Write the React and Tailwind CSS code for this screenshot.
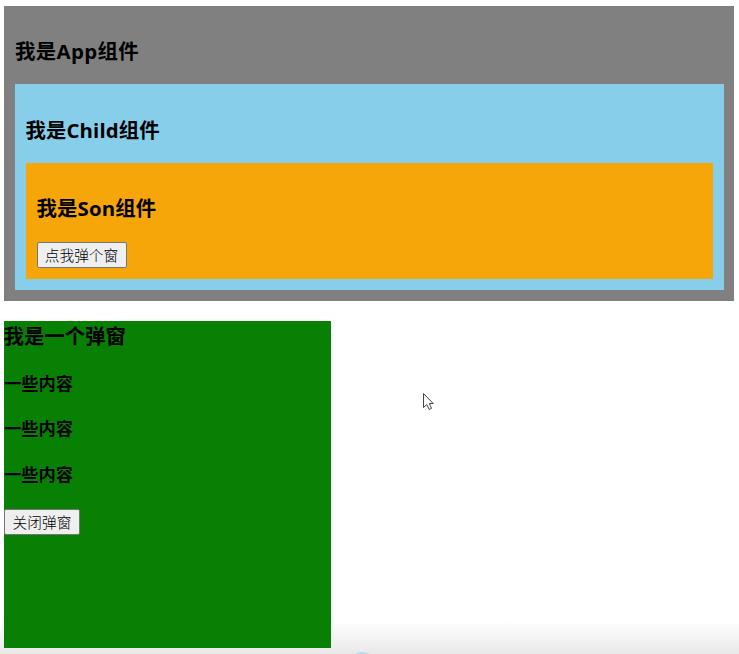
import React, { useState } from 'react';

const Son = ({ onOpen }) => (
  <div className="h-[116px] bg-[#f7a609] px-[11px] pt-[30px]">
    <h3 className="h-[30px] text-[20.4px] leading-[30px] font-bold tracking-[0.15px]">我是Son组件</h3>
    <button
      onClick={onOpen}
      className="mt-[19px] block h-[26px] w-[90px] rounded-[2px] border border-[#767676] bg-[#efefef] text-[14.7px] leading-[24px] font-light whitespace-nowrap"
    >
      点我弹个窗
    </button>
  </div>
);

const Child = ({ onOpen }) => (
  <div className="h-[206px] bg-[#87ceeb] pt-[31px] pr-[11px] pl-[10.5px]">
    <h3 className="mb-[18px] h-[30px] text-[20.4px] leading-[30px] font-bold tracking-[0.1px]">我是Child组件</h3>
    <Son onOpen={onOpen} />
  </div>
);

const Dialog = ({ onClose }) => (
  <div className="mt-5 h-[327px] w-[327px] bg-[#088004]">
    <h3 className="-ml-[0.5px] h-[30px] text-[20.4px] leading-[30px] font-bold">我是一个弹窗</h3>
    <div className="mt-[20px] flex flex-col gap-[19.4px] text-[17.3px] leading-[26px] font-bold">
      <h4>一些内容</h4>
      <h4>一些内容</h4>
      <h4>一些内容</h4>
    </div>
    <button
      onClick={onClose}
      className="mt-[21.2px] block h-[26px] w-[76px] rounded-[2px] border border-[#767676] bg-[#efefef] text-[14.7px] leading-[24px] font-light whitespace-nowrap"
    >
      关闭弹窗
    </button>
  </div>
);

const App = () => {
  const [isShow, setIsShow] = useState(true);

  return (
    <div className="relative h-[654px] w-[739px] overflow-hidden bg-linear-to-b from-white from-95% to-[#e8e8e8] pt-[6px] pl-[4px] font-['Open_Sans','Noto_Sans_CJK_SC',sans-serif] text-black">
      <div className="h-[295px] w-[730px] bg-[#808080] pt-[30px] pr-[10px] pl-[11px]">
        <h3 className="mb-[18px] h-[30px] text-[20.4px] leading-[30px] font-bold tracking-[0.35px]">我是App组件</h3>
        <Child onOpen={() => setIsShow(true)} />
      </div>
      {isShow && <Dialog onClose={() => setIsShow(false)} />}

      {/* mouse pointer */}
      <svg className="absolute top-[392px] left-[422px]" width="13" height="19" viewBox="0 0 13 19">
        <path d="M1.5 1.5V15.5L4.8 12.5L7.2 17.5L9.5 16.4L7.3 11.5H11.2Z" fill="white" stroke="#444" />
      </svg>
      <div className="absolute top-[651.5px] left-[347px] h-[30px] w-[30px] rounded-full bg-[#b9d9ec]" />
    </div>
  );
};

export default App;
